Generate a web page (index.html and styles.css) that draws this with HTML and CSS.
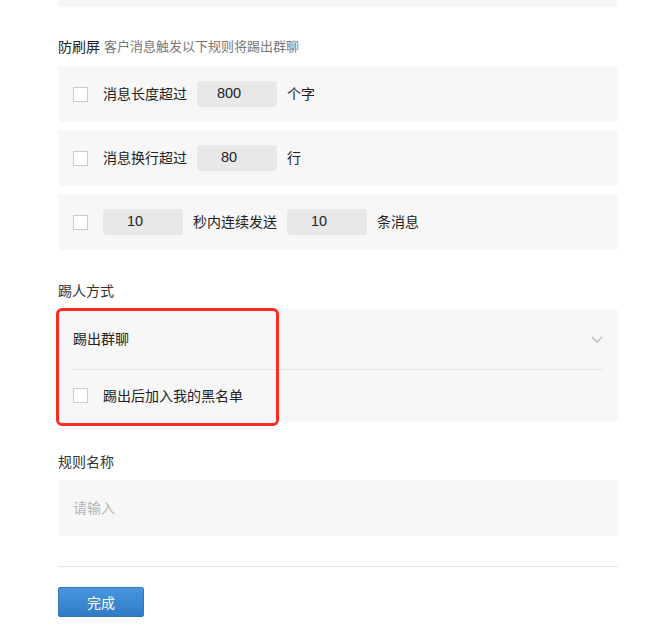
FILE: index.html
```html
<!DOCTYPE html>
<html lang="zh-CN">
<head>
<meta charset="utf-8">
<title>防刷屏</title>
<link rel="stylesheet" href="styles.css">
</head>
<body>
<div class="page">
  <div class="top-card"></div>

  <div class="section-title first">
    <span class="title-main">防刷屏</span>
    <span class="title-sub">客户消息触发以下规则将踢出群聊</span>
  </div>

  <div class="rules">
    <div class="card row">
      <span class="checkbox"></span>
      <span class="text">消息长度超过</span>
      <span class="num-input">800</span>
      <span class="text">个字</span>
    </div>
    <div class="card row">
      <span class="checkbox"></span>
      <span class="text">消息换行超过</span>
      <span class="num-input">80</span>
      <span class="text">行</span>
    </div>
    <div class="card row">
      <span class="checkbox"></span>
      <span class="num-input">10</span>
      <span class="text">秒内连续发送</span>
      <span class="num-input">10</span>
      <span class="text">条消息</span>
    </div>
  </div>

  <div class="section-title">踢人方式</div>
  <div class="select-card">
    <div class="select-row">
      <span class="text">踢出群聊</span>
      <svg class="chevron" width="12" height="7" viewBox="0 0 12 7"><polyline points="1,1 6,6 11,1" fill="none" stroke="#bdbdbd" stroke-width="1.6"/></svg>
    </div>
    <div class="divider-inner"></div>
    <div class="check-row">
      <span class="checkbox"></span>
      <span class="text">踢出后加入我的黑名单</span>
    </div>
    <div class="highlight"></div>
  </div>

  <div class="section-title">规则名称</div>
  <div class="card name-input">
    <span class="placeholder">请输入</span>
  </div>

  <div class="footer-line"></div>
  <button class="btn-done">完成</button>
</div>
</body>
</html>
```

FILE: styles.css
```css
* { box-sizing: border-box; }
html, body { margin: 0; padding: 0; background: #fff; }
body {
  font-family: "Liberation Sans", "Noto Sans CJK SC", sans-serif;
  font-size: 14px;
  color: #333;
}
.page {
  width: 560px;
  margin-left: 58px;
}
.top-card {
  height: 7px;
  background: #f7f7f7;
  border-radius: 0 0 3px 3px;
}
.section-title {
  height: 20px;
  line-height: 20px;
  margin-top: 31px;
  margin-bottom: 8px;
  font-size: 14px;
  color: #333;
  display: flex;
  align-items: center;
  gap: 4px;
}
.section-title.first { margin-top: 30px; margin-bottom: 9px; }
.title-main { color: #222; }
.title-sub { font-size: 13px; color: #777; }

.rules {
  display: flex;
  flex-direction: column;
  gap: 8px;
}
.card {
  background: #f7f7f7;
  border-radius: 3px;
}
.row {
  height: 56px;
  padding: 0 15px;
  display: flex;
  align-items: center;
  gap: 10px;
}
.checkbox {
  width: 15px;
  height: 15px;
  border: 1px solid #ccc;
  background: #fff;
  flex: none;
  margin-right: 5px;
}
.text {
  line-height: 20px;
  color: #222;
}
.num-input {
  width: 80px;
  height: 26px;
  line-height: 25px;
  background: #e8e8e8;
  border-radius: 3px;
  text-align: center;
  padding-right: 16px;
  color: #222;
  font-size: 14.5px;
}

.select-card {
  position: relative;
  background: #f7f7f7;
  border-radius: 3px;
  padding: 0 15px;
}
.select-row {
  height: 60px;
  display: flex;
  align-items: center;
  justify-content: space-between;
}
.chevron { margin-right: 0; margin-top: 0; }
.divider-inner {
  height: 1px;
  background: #e3e3e3;
}
.check-row {
  height: 51px;
  display: flex;
  align-items: center;
  gap: 10px;
}
.highlight {
  position: absolute;
  left: -2px;
  top: -1px;
  width: 223px;
  height: 118px;
  border: 3px solid #ff2b20;
  border-radius: 6px;
}

.name-input {
  height: 56px;
  padding: 0 15px;
  display: flex;
  align-items: center;
}
.placeholder { color: #b5b5b5; line-height: 20px; }

.footer-line {
  height: 1px;
  background: #e5e5e5;
  margin-top: 30px;
}
.btn-done {
  margin-top: 20px;
  width: 86px;
  height: 30px;
  border: 1px solid #2f78c0;
  border-radius: 2px;
  background: linear-gradient(#4a96dd, #2f7bc5);
  color: #fff;
  font-family: "Liberation Sans", "Noto Sans CJK SC", sans-serif;
  font-size: 14px;
  padding: 0;
  display: block;
}
```
